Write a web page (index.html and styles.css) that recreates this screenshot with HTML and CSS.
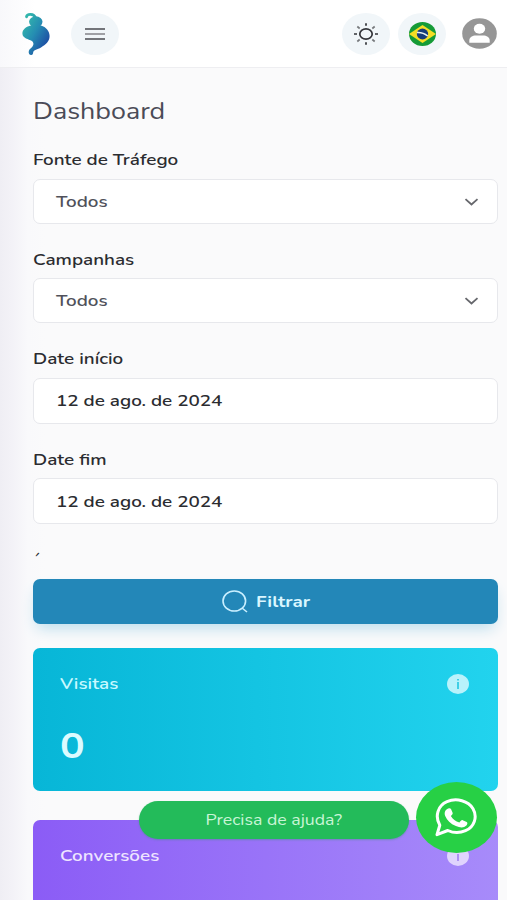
FILE: index.html
```html
<!DOCTYPE html>
<html lang="pt-BR">
<head>
<meta charset="utf-8">
<meta name="viewport" content="width=device-width">
<title>Dashboard</title>
<link rel="stylesheet" href="styles.css">
</head>
<body>
<header class="topbar">
  <svg class="logo" viewBox="0 0 28 44">
    <defs><linearGradient id="brand" gradientUnits="userSpaceOnUse" x1="1" y1="12" x2="26" y2="27"><stop offset="0" stop-color="#32b5ac"/><stop offset=".5" stop-color="#258db2"/><stop offset="1" stop-color="#1e55a5"/></linearGradient></defs>
    <path d="M4.500 4.800C5 1.500 12 1 13.500 6" fill="none" stroke="url(#brand)" stroke-width="2.800" stroke-linecap="round"/>
    <ellipse cx="13.800" cy="9.800" rx="6.700" ry="5.500" fill="url(#brand)"/>
    <path fill="url(#brand)" d="M9 13.500h10c5 1.500 8.600 5.500 8.600 10.500 0 5.500-3.900 8.500-8.600 11.500-3.500 2.200-7.500 2.300-7.800 4.800-.1 1.400-.6 2.700-1.900 2.700-2.300 0-2.900-2.200-2.500-4 .4-1.900 2.300-2.600 3.700-4.500 1.700-2.300 1-4.600-1-5.800C7 27.200.4 26.500.4 21.500.4 17.300 4.500 14.500 9 13.500Z"/>
  </svg>
  <button class="round" aria-label="Menu"><svg width="20" height="14" viewBox="0 0 20 14"><path d="M0 2h20M0 12h20" stroke="#4a4b50" stroke-width="1.700"/><path d="M0 7h20" stroke="#909196" stroke-width="1.700"/></svg></button>
  <div class="tools">
    <button class="round" aria-label="Tema"><svg width="26" height="24" viewBox="0 0 26 24" fill="none" stroke="#333439" stroke-width="1.700"><ellipse cx="13" cy="12" rx="6.200" ry="5.200"/><path d="M13 1.200v2.600M13 20.200v2.600M1 12h3M22 12h3"/><path stroke="#77797d" d="M4.300 4.500l2.400 2M19.300 17.500l2.400 2M4.300 19.500l2.400-2M19.300 6.500l2.400-2"/></svg></button>
    <button class="round" aria-label="Idioma"><svg width="27" height="24" viewBox="0 0 27 24"><defs><clipPath id="disc"><ellipse cx="13.500" cy="12" rx="13.500" ry="12"/></clipPath></defs><g clip-path="url(#disc)"><path fill="#159b37" d="M0 0h27v24H0z"/><path fill="#f5de25" d="M0 12 13.500 3 27 12 13.500 21z"/><ellipse cx="13.500" cy="12" rx="5.700" ry="5.400" fill="#173b79"/><path d="M8 10.500q6-.4 10.700 3.500" fill="none" stroke="#e8f0ee" stroke-width="1.500"/></g></svg></button>
    <svg class="avatar" viewBox="0 0 35 31"><ellipse cx="17.500" cy="15.500" rx="17.300" ry="15.300" fill="#969696"/><ellipse cx="17.500" cy="10.700" rx="5.700" ry="5" fill="#fff"/><path fill="#fff" d="M7.300 24.700v-2.200c0-3.500 3.300-5 6.500-5h7.400c3.200 0 6.500 1.500 6.500 5v2.200z"/></svg>
  </div>
</header>
<main class="content">
  <h1 class="title"><span class="wide">Dashboard</span></h1>
  <form class="filters">
    <div class="field"><div class="label"><span class="wide">Fonte de Tráfego</span></div><div class="control"><span class="wide option">Todos</span><svg class="chevron" viewBox="0 0 14 8"><path d="M1 1.200 7 6.500 13 1.200"/></svg></div></div>
    <div class="field"><div class="label"><span class="wide">Campanhas</span></div><div class="control"><span class="wide option">Todos</span><svg class="chevron" viewBox="0 0 14 8"><path d="M1 1.200 7 6.500 13 1.200"/></svg></div></div>
    <div class="field date"><div class="label"><span class="wide">Date início</span></div><div class="control"><span class="wide">12 de ago. de 2024</span></div></div>
    <div class="field date"><div class="label"><span class="wide">Date fim</span></div><div class="control"><span class="wide">12 de ago. de 2024</span></div></div>
    <div class="mark">´</div>
    <button class="submit" type="button"><svg width="26" height="23" viewBox="0 0 26 23" fill="none" stroke="#c9efff" stroke-width="1.600"><ellipse cx="12.300" cy="11" rx="11.300" ry="10"/><path d="m20 18 5 4"/></svg><span class="wide submit-text">Filtrar</span></button>
  </form>
  <section class="card visits">
    <div class="card-head"><span class="wide">Visitas</span><svg class="info" viewBox="0 0 22 20"><ellipse cx="11" cy="10" rx="11" ry="10" fill="#b9f2fb"/><path d="M11 8v7M11 5v1.500" stroke="#22c6e0" stroke-width="1.600"/></svg></div>
    <div class="value"><span class="wide">0</span></div>
  </section>
  <section class="card conversions">
    <div class="card-head"><span class="wide">Conversões</span><svg class="info" viewBox="0 0 22 20"><ellipse cx="11" cy="10" rx="11" ry="10" fill="#e0d4fd"/><path d="M11 8v7M11 5v1.500" stroke="#a080f0" stroke-width="1.600"/></svg></div>
  </section>
</main>
<aside class="help">
  <div class="help-pill"><span class="wide help-text">Precisa de ajuda?</span></div>
  <div class="whatsapp"><svg width="43" height="39" viewBox="0 0 43 39"><path fill="none" stroke="#fff" stroke-width="3" stroke-linejoin="round" d="M2 36.700 4.800 27.300C-.5 18 3 7.500 12 3.700c9.500-4.200 21.500-.7 26 7 4.800 8.300 1.200 18.200-7.500 22-5.500 2.400-12.200 2.300-17.700-.2z"/><path fill="#fff" d="M13.300 10.500c1.200-.5 2.300-.3 2.800.8l1.500 3.400c.5 1.300-.8 2.100-1.700 3.200 1.800 3.400 4.700 5.400 8.500 6.600 1.300-1.100 2.100-2.800 3.300-2.300l4 1.900c1.200.6.700 2.500-.3 3.500-2.600 2.500-6.300 2.200-10.500.5-5.400-2.300-9-6.100-10.700-10.200-1.200-3-.2-6.100 3.100-7.400z"/></svg></div>
</aside>
</body>
</html>
```
FILE: styles.css
```css
* { box-sizing: border-box; }
html, body { height: 100%; }
body {
  margin: 0;
  overflow: hidden;
  display: flex;
  flex-direction: column;
  font: 600 16.500px/22px Nunito, "Open Sans", "Noto Sans", sans-serif;
  color: #2b2c30;
  background: linear-gradient(90deg, #efeef4 0, #f3f2f7 12px, #f9f9fb 28px, #fafafb 45px);
}
button { border: 0; padding: 0; font: inherit; }
.wide { display: inline-block; transform: scaleX(1.143); transform-origin: left; }
.topbar {
  flex: none;
  height: 68px;
  display: flex;
  align-items: center;
  padding: 0 10px 0 22px;
  border-bottom: 1px solid #eeeef1;
  background: linear-gradient(90deg, #f8f8fb, #fff 35px);
}
.logo { width: 28px; height: 44px; margin-right: 21px; }
.round {
  width: 48px;
  height: 42px;
  border-radius: 50%;
  background: #f1f6f9;
  display: grid;
  place-items: center;
}
.tools { margin-left: auto; display: flex; align-items: center; gap: 8px; }
.avatar { width: 35px; height: 31px; margin-left: 8px; }
.content { flex: none; padding: 27px 9px 0 33px; }
.title { margin: 0; font-size: 23.500px; font-weight: 400; line-height: 32px; color: #4a4b57; }
.filters { display: flex; flex-direction: column; padding-top: 22px; }
.field { height: 99.500px; }
.field.date { height: 100.500px; }
.label { height: 22px; margin-bottom: 7.500px; }
.control {
  height: 45px;
  border: 1px solid #e7e8ec;
  border-radius: 7px;
  background: #fff;
  display: flex;
  align-items: center;
  justify-content: space-between;
  padding: 1px 18px 0 22px;
}
.date .control { height: 46px; }
.option { color: #50515a; }
.chevron { width: 15px; height: 8px; fill: none; stroke: #66676c; stroke-width: 1.800; }
.mark { height: 30px; margin-top: -4px; margin-bottom: 4px; font-size: 16px; line-height: 30px; transform: skewX(-15deg); }
.submit {
  height: 45px;
  border-radius: 7px;
  background: #2387b8;
  box-shadow: 0 8px 15px -4px #b8dcec;
  color: #d9f6ff;
  display: flex;
  align-items: center;
  justify-content: center;
  gap: 8px;
}
.submit-text { margin-right: 6px; font-weight: 700; }
.card { border-radius: 7px; padding: 25px 29px 0 27px; }
.visits { height: 143px; margin-top: 24px; background: linear-gradient(90deg, #07b6d7, #22d3ee); color: #c9f9ff; }
.conversions { height: 120px; margin-top: 29px; background: linear-gradient(90deg, #8b5cf6, #a78bfa); color: #eee5ff; }
.card-head { display: flex; align-items: center; justify-content: space-between; }
.info { width: 22px; height: 20px; }
.value { margin-top: 32px; font-size: 36px; line-height: 40px; font-weight: 700; color: #dcfbff; }
.help { position: absolute; right: 10px; bottom: 47px; display: flex; align-items: center; gap: 7px; }
.help-pill {
  width: 270px;
  height: 38px;
  margin-top: 5px;
  border-radius: 19px;
  background: #23bb5a;
  color: #c9f5d6;
  display: grid;
  place-items: center;
  font-size: 15.500px;
  font-weight: 400;
  box-shadow: 0 1px 2px #318f6b66;
}
.help-text { transform-origin: center; }
.whatsapp { width: 81px; height: 71px; border-radius: 50%; background: #27d045; display: grid; place-items: center; }
```
